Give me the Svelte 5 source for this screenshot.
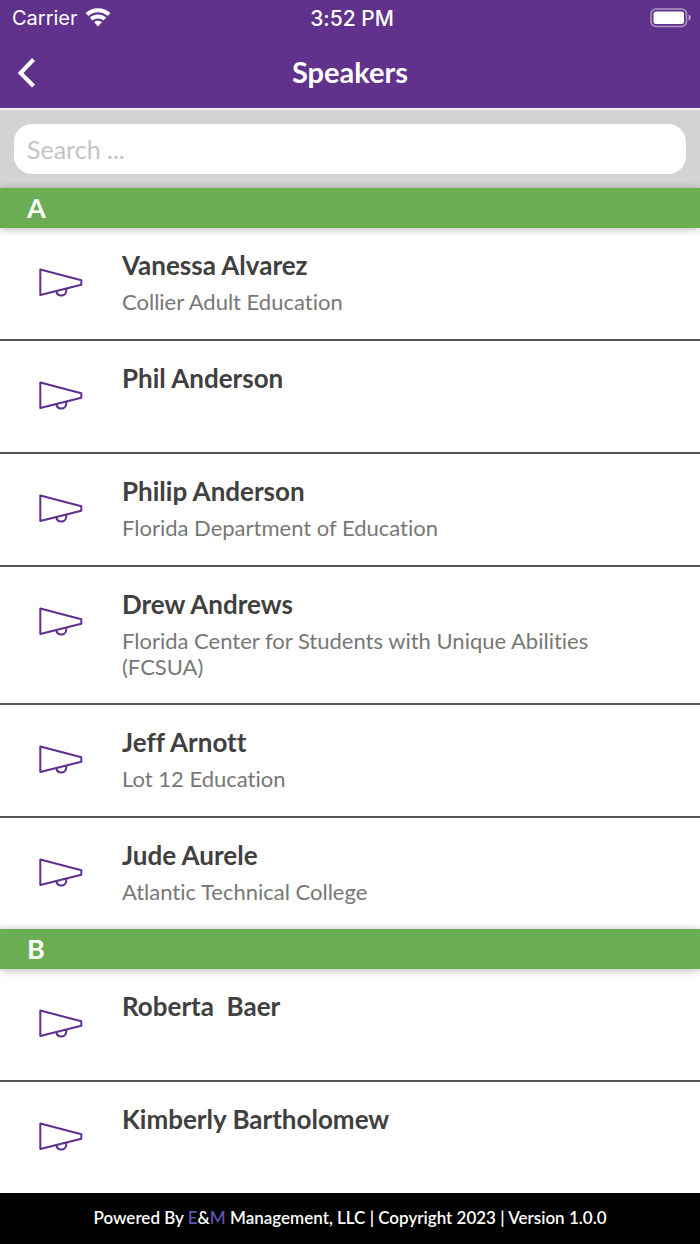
<script lang="ts">
  type Speaker = { name: string; org?: string };

  const speakers: Speaker[] = [
    { name: 'Vanessa Alvarez', org: 'Collier Adult Education' },
    { name: 'Phil Anderson' },
    { name: 'Philip Anderson', org: 'Florida Department of Education' },
    { name: 'Drew Andrews', org: 'Florida Center for Students with Unique Abilities (FCSUA)' },
    { name: 'Jeff Arnott', org: 'Lot 12 Education' },
    { name: 'Jude Aurele', org: 'Atlantic Technical College' },
    { name: 'Roberta  Baer' },
    { name: 'Kimberly Bartholomew' },
  ];

  let query = $state('');

  // group by the first letter of the last name
  let groups = $derived.by(() => {
    const result: { letter: string; items: Speaker[] }[] = [];
    for (const speaker of speakers) {
      if (!speaker.name.toLowerCase().includes(query.trim().toLowerCase())) continue;
      const letter = speaker.name.split(' ').pop()![0];
      const last = result[result.length - 1];
      if (last?.letter === letter) last.items.push(speaker);
      else result.push({ letter, items: [speaker] });
    }
    return result;
  });
</script>

<div class="screen">
  <header class="header">
    <div class="status-bar">
      <span class="carrier">
        Carrier
        <svg width="26" height="20" viewBox="0 0 26 20" fill="#fff" aria-hidden="true">
          <path d="M13 .2C8.200 .2 3.900 2 .6 5.100L3.300 8C5.900 5.600 9.300 4.200 13 4.200s7.100 1.400 9.700 3.800l2.700-2.900C22.100 2 17.800.2 13 .2z" />
          <path d="M13 6.600c-3.100 0-5.900 1.200-8.100 3.100l2.700 2.900c1.400-1.200 3.300-2 5.400-2s4 .8 5.400 2l2.700-2.900C18.900 7.800 16.100 6.600 13 6.600z" />
          <path d="M13 12.800c-1.500 0-2.800.5-3.800 1.400L13 18.400l3.800-4.200c-1-.9-2.300-1.400-3.800-1.400z" />
        </svg>
      </span>
      <span class="time">3:52 PM</span>
      <svg class="battery" width="42" height="20" viewBox="0 0 42 20" aria-hidden="true">
        <rect x="1" y="1" width="35.500" height="17.500" rx="5" fill="none" stroke="#fff" stroke-opacity=".5" stroke-width="1.500" />
        <rect x="3.500" y="3.500" width="30.500" height="12.500" rx="2.500" fill="#fff" />
        <path d="M38.500 6.500c1.500.6 2.200 1.700 2.200 3s-.7 2.400-2.200 3z" fill="#fff" fill-opacity=".55" />
      </svg>
    </div>
    <div class="nav-bar">
      <button class="back" aria-label="Back">
        <svg width="20" height="32" viewBox="0 0 20 32" fill="none" stroke="#fff" stroke-width="4">
          <path d="M17.500 3.500L4.500 17l13 13" />
        </svg>
      </button>
      <h1>Speakers</h1>
    </div>
  </header>

  <div class="search">
    <input type="search" placeholder="Search ..." aria-label="Search speakers" bind:value={query} />
  </div>

  <main class="list">
    {#each groups as group (group.letter)}
      <section>
        <h2 class="divider">{group.letter}</h2>
        <ul>
          {#each group.items as speaker (speaker.name)}
            <li class="speaker">
              <svg class="horn" width="44" height="30" viewBox="0 0 44 30" fill="none" stroke="#5e2f8e" stroke-width="2" aria-hidden="true">
                <path d="M1.300 1.500v25.500L42.300 16.700v-4.400z" stroke-linejoin="round" />
                <path d="M17.300 23c.4 2.900 2.400 4.500 4.900 4.500 3 0 5.100-2.200 5.100-5.600v-1.300" />
              </svg>
              <div class="details">
                <h3>{speaker.name}</h3>
                {#if speaker.org}
                  <p>{speaker.org}</p>
                {/if}
              </div>
            </li>
          {/each}
        </ul>
      </section>
    {/each}
  </main>

  <footer class="footer">
    Powered By <span>E</span>&amp;<span>M</span> Management, LLC | Copyright 2023 | Version 1.0.0
  </footer>
</div>

<style>
  :global(body) {
    margin: 0;
    background: #fff;
  }

  .screen {
    display: flex;
    flex-direction: column;
    min-height: 100vh;
    font-family: Lato, 'Open Sans', sans-serif;
    font-variant-ligatures: none;
    color: #404040;
  }

  h1,
  h2,
  h3,
  p,
  ul {
    margin: 0;
    padding: 0;
  }

  .header {
    background: #61328b;
    border-bottom: 2px solid #f4f0f7;
    color: #fff;
  }

  .status-bar {
    display: grid;
    grid-template-columns: 1fr auto 1fr;
    align-items: center;
    height: 36px;
    padding: 0 8px 0 12px;
    font-family: Inter, sans-serif;
    font-size: 20px;
  }

  .carrier {
    display: flex;
    align-items: center;
    gap: 7px;
  }

  .time {
    font-size: 21px;
    font-weight: 500;
  }

  .battery {
    justify-self: end;
  }

  .nav-bar {
    display: grid;
    grid-template-columns: 60px 1fr 60px;
    align-items: center;
    height: 72px;
  }

  .back {
    display: flex;
    width: 60px;
    padding: 8px 16px;
    border: none;
    background: none;
    cursor: pointer;
  }

  h1 {
    font-size: 29px;
    font-weight: 700;
    line-height: 36px;
    text-align: center;
  }

  .search {
    padding: 14px;
    background: #d3d3d3;
  }

  .search input {
    display: block;
    box-sizing: border-box;
    width: 100%;
    height: 50px;
    padding: 0 13px;
    border: none;
    border-radius: 18px;
    background: #fff;
    color: #404040;
    font-family: inherit;
    font-size: 25px;
    appearance: none;
  }

  .search input::placeholder {
    color: #c4c4c4;
    opacity: 1;
  }

  .list {
    flex: 1;
  }

  .divider {
    position: relative;
    padding: 0 27px;
    background: #6aad52;
    box-shadow: 0 1px 8px rgba(0, 0, 0, 0.3);
    color: #fff;
    font-size: 27px;
    font-weight: 700;
    line-height: 40px;
  }

  ul {
    list-style: none;
  }

  .speaker {
    display: flex;
    align-items: flex-start;
    gap: 39px;
    min-height: 67px;
    padding: 21px 39px 23px;
    border-bottom: 2px solid #555;
  }

  .speaker:last-child {
    border-bottom: none;
  }

  .horn {
    flex: none;
    margin-top: 19px;
  }

  .details {
    flex: 1;
  }

  h3 {
    font-size: 26px;
    font-weight: 700;
    line-height: 32px;
    white-space: pre-wrap;
  }

  p {
    margin-top: 8px;
    color: #777;
    font-size: 22px;
    line-height: 26px;
  }

  .footer {
    position: sticky;
    bottom: 0;
    padding: 13px 16px 14px;
    background: #000;
    color: #fff;
    font-size: 17px;
    font-weight: 600;
    line-height: 24px;
    text-align: center;
  }

  .footer span {
    color: #5a55a8;
  }
</style>
